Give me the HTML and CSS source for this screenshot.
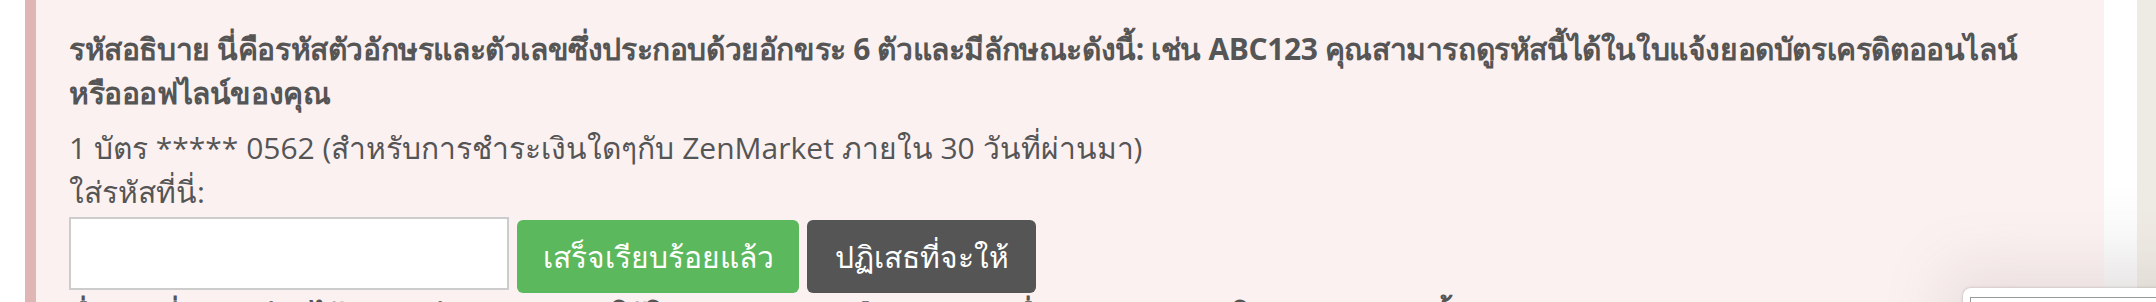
FILE: index.html
```html
<!DOCTYPE html>
<html lang="th">
<head>
    <meta charset="UTF-8">
    <title>ยืนยันบัตร</title>
    <link rel="stylesheet" href="styles.css">
</head>
<body>
    <div class="page">
        <div class="verify-box">
            <p class="hint">รหัสอธิบาย นี่คือรหัสตัวอักษรและตัวเลขซึ่งประกอบด้วยอักขระ 6 ตัวและมีลักษณะดังนี้: เช่น ABC123 คุณสามารถดูรหัสนี้ได้ในใบแจ้งยอดบัตรเครดิตออนไลน์<br>หรือออฟไลน์ของคุณ</p>
            <p class="card-info">1 บัตร ***** 0562 (สำหรับการชำระเงินใดๆกับ ZenMarket ภายใน 30 วันที่ผ่านมา)<br>ใส่รหัสที่นี่:</p>
            <div class="code-row">
                <input type="text" class="code-input">
                <button class="btn btn-done">เสร็จเรียบร้อยแล้ว</button>
                <button class="btn btn-refuse">ปฏิเสธที่จะให้</button>
            </div>
            <p class="hint">ชื่อบัตรที่ลงทะเบียนไว้กับบัญชีของคุณจะถูกใช้ในการตรวจสอบยืนยันตัวตนเพื่อความปลอดภัยในการชำระเงินทั้งหมด</p>
        </div>
        <div class="gutter"></div>
        <div class="side-strip"></div>
    </div>

    <!-- chat widget peeking in at the corner -->
    <div class="chat-widget">
        <div class="chat-field"></div>
    </div>
</body>
</html>
```

FILE: styles.css
```css
* {
    margin: 0;
    padding: 0;
    box-sizing: border-box;
}

body {
    background-color: #fff;
    color: #555;
    font-family: "Open Sans", "Noto Sans", sans-serif;
    font-size: 30px;
    line-height: 44px;
    overflow: hidden;
    height: 302px;
}

.page {
    display: flex;
    height: 302px;
    padding-left: 25px;
}

/* Verification panel */
.verify-box {
    flex: 0 0 2079px;
    background-color: #fbf1f1;
    border-left: 11px solid #e0b6b5;
    padding: 27px 0 0 33px;
    overflow: hidden;
}

.hint {
    font-weight: bold;
    white-space: nowrap;
    letter-spacing: -0.4px;
}

.card-info {
    margin-top: 11px;
}

.code-row {
    display: flex;
    align-items: flex-end;
    gap: 8px;
    margin-top: 3px;
    margin-bottom: 1px;
}

.code-input {
    width: 440px;
    height: 73px;
    border: 2px solid #ccc;
    background: #fff;
    margin-bottom: 3px;
}

.btn {
    height: 73px;
    border: none;
    border-radius: 6px;
    color: #fff;
    font-family: inherit;
    font-size: 30px;
    line-height: 44px;
    padding: 0 20px;
}

.btn-done {
    width: 282px;
    background-color: #5cb85c;
}

.btn-refuse {
    width: 229px;
    background-color: #555;
}

.gutter {
    flex: 0 0 33px;
    background: linear-gradient(to bottom, #fff 60%, #f4f4f4);
}

.side-strip {
    flex: 1;
    background-color: #eeebe4;
}

/* Chat Widget */
.chat-widget {
    position: absolute;
    left: 1963px;
    top: 288px;
    width: 260px;
    height: 120px;
    background: #fff;
    border-radius: 8px 0 0 0;
    box-shadow: 0 0 60px 20px rgba(160, 140, 140, 0.18), 0 0 3px rgba(0, 0, 0, 0.25);
    padding: 9px 0 0 7px;
}

.chat-field {
    height: 40px;
    border: 1px solid #999;
}
```
